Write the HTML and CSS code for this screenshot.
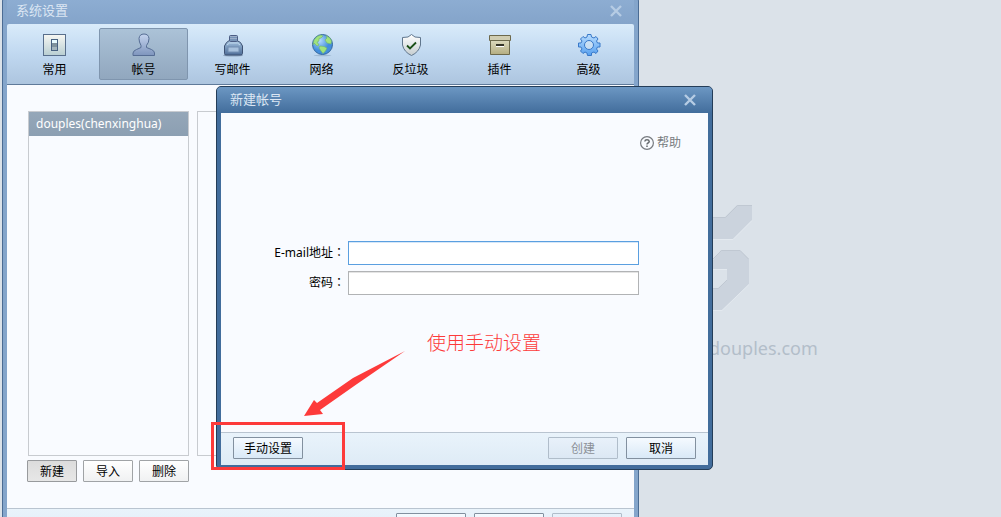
FILE: index.html
```html
<!DOCTYPE html>
<html lang="zh-CN">
<head>
<meta charset="utf-8">
<title>系统设置</title>
<link rel="stylesheet" href="styles.css">
</head>
<body>
<div class="desktop">
  <div class="brand">
    <svg class="brand-mark" width="72" height="108" viewBox="0 0 72 108" aria-hidden="true">
      <g fill="#cbd3dd">
        <path d="M0 13H44L56 1H71V16L52 35H0Z"/>
        <path fill-rule="evenodd" d="M26 64L40 46H59L68 55V80L41 106H0V84H37L46 76V65H26Z"/>
      </g>
      <path d="M0 13.500H44.500L56.500 1.500H71M31 56L40.500 46.500H59L67.500 55M20 84.500H37.500L46 76" fill="none" stroke="#c0c8d2"/>
      <path d="M0 35.500H52L71 16.500M26 65.500H46M20 106.500H41L68 80.500" fill="none" stroke="#e3e9ef"/>
    </svg>
    <span class="brand-name">douples.com</span>
  </div>

  <section class="window settings" aria-label="系统设置">
    <header class="titlebar">
      <h1 class="title">系统设置</h1>
      <button class="close" type="button" aria-label="关闭"><svg width="12" height="12" viewBox="0 0 12 12"><path d="M1 1L11 11M11 1L1 11" stroke="currentColor" stroke-width="2.400"/></svg></button>
    </header>
    <nav class="toolbar">
      <button class="tool" type="button">
        <svg class="icon" viewBox="0 0 24 24"><defs><linearGradient id="g1" x2="0" y2="1"><stop stop-color="#f7f7f3"/><stop offset="1" stop-color="#b8ced2"/></linearGradient></defs><rect x="0.500" y="1.500" width="22" height="21" fill="url(#g1)" stroke="#596f8c"/><rect x="8.500" y="6.500" width="6" height="11" fill="#7f929c" stroke="#476181"/><path d="M9 7h5v3h-5z" fill="#e8fbff"/><path d="M9 14h5v3h-5z" fill="#a3b5bd"/></svg>
        <span>常用</span>
      </button>
      <button class="tool tool-active" type="button">
        <svg class="icon" viewBox="0 0 24 24"><defs><linearGradient id="g2" x2="0" y2="1"><stop stop-color="#c4d3ee"/><stop offset="1" stop-color="#7e95bd"/></linearGradient></defs><path d="M1 22.500V20Q1.500 17.500 4.500 16.500L9 14.500V12.500Q7 9 7 5.500Q7.500 1 12 1T17 5.500Q17 9.500 14.500 12.500V14.500L19.500 16.500Q22.500 18 22.500 20V22.500Z" fill="url(#g2)" stroke="#566d94"/></svg>
        <span>帐号</span>
      </button>
      <button class="tool" type="button">
        <svg class="icon" viewBox="0 0 24 24"><defs><linearGradient id="g3" x2="0" y2="1"><stop stop-color="#a7c6e3"/><stop offset="1" stop-color="#4e6d98"/></linearGradient></defs><ellipse cx="12" cy="22.500" rx="10" ry="1" fill="#8ba3bf"/><path d="M5.500 9.500L9 7H15L19.500 9.500L21.500 13V20.500Q21.500 22 19.500 22H5Q3.500 22 3.500 20.500V13Z" fill="url(#g3)" stroke="#3e5273"/><rect x="8.500" y="2.500" width="8" height="6" rx="1" fill="#7793b7" stroke="#4b5c83"/><path d="M9 3.500h7M9 5.500h7" stroke="#9cafc9"/><path d="M6 12L8.500 10H16.500L19 12" fill="none" stroke="#c1d9ed"/><rect x="7" y="14" width="11" height="5" fill="#a7c1dd" stroke="#728eb2"/></svg>
        <span>写邮件</span>
      </button>
      <button class="tool" type="button">
        <svg class="icon" viewBox="0 0 24 24"><defs><radialGradient id="g4" cx=".35" cy=".3"><stop stop-color="#b5dcff"/><stop offset="1" stop-color="#438edc"/></radialGradient></defs><ellipse cx="12.500" cy="22.500" rx="9" ry=".8" fill="#9fb9d3"/><circle cx="12.500" cy="11.500" r="10" fill="url(#g4)" stroke="#34679d"/><path d="M4 7L7 3.500L11 2L13 3L11 5L9 5.500V8L7 9L9 12L7 13L4 10L3 12ZM16 2.500L20 5L21.500 8L21 11L17 10L15 7L17 5ZM10 13L14 13.500L17 15L15.500 18L13 20.500L11 18L9 15Z" fill="#a1e37c" stroke="#71b36b" stroke-width=".6"/></svg>
        <span>网络</span>
      </button>
      <button class="tool" type="button">
        <svg class="icon" viewBox="0 0 24 24"><defs><linearGradient id="g5" x2="0" y2="1"><stop stop-color="#fff"/><stop offset="1" stop-color="#c5cdd0"/></linearGradient></defs><path d="M12.500 1.500L16 4L21.500 4.500V12Q20 19 12.500 22.500Q5 19 3.500 12V4.500L9 4Z" fill="url(#g5)" stroke="#60768d"/><path d="M8 12.500L11 15.500L17 9.500" fill="none" stroke="#1b5017" stroke-width="1.800"/></svg>
        <span>反垃圾</span>
      </button>
      <button class="tool" type="button">
        <svg class="icon" viewBox="0 0 24 24"><defs><linearGradient id="g6" x2="0" y2="1"><stop stop-color="#dcd9bd"/><stop offset="1" stop-color="#b4ad81"/></linearGradient></defs><path d="M2.500 7.500H21.500V21.500H2.500Z" fill="url(#g6)" stroke="#6d694c"/><path d="M1.500 2.500H22.500V7.500H1.500Z" fill="#d0cdb2" stroke="#6d694c"/><path d="M8 12h8" stroke="#353428" stroke-width="2"/><path d="M8 13.500h8" stroke="#fff"/></svg>
        <span>插件</span>
      </button>
      <button class="tool" type="button">
        <svg class="icon" viewBox="0 0 24 24"><defs><linearGradient id="g7" x2="0" y2="1"><stop stop-color="#b7dcff"/><stop offset="1" stop-color="#57a0ef"/></linearGradient></defs><path fill-rule="evenodd" d="M10.500 1.500H14L14.500 4L17 5L19 3.500L21 6L19.500 8L20.500 10H23V14H20.500L19.500 16L21 18L19 20.500L17 19L14.500 20V22.500H10.500L10 20L8 19L6 20.500L3.500 18L5 16L4 14H1.500V10H4L5 8L3.500 6L6 3.500L8 5L10 4ZM16.500 12A4.500 4.500 0 1 0 7.500 12A4.500 4.500 0 1 0 16.500 12Z" fill="url(#g7)" stroke="#3878c8" stroke-linejoin="round"/></svg>
        <span>高级</span>
      </button>
    </nav>
    <div class="settings-body">
      <div class="panels">
        <div class="accounts"><div class="account">douples(chenxinghua)</div></div>
        <div class="details"></div>
      </div>
      <div class="account-actions">
        <button class="small-btn small-btn-pressed" type="button">新建</button>
        <button class="small-btn" type="button">导入</button>
        <button class="small-btn" type="button">删除</button>
      </div>
    </div>
    <footer class="settings-footer">
      <button class="btn" type="button"></button>
      <button class="btn" type="button"></button>
      <button class="btn" type="button" disabled></button>
    </footer>
  </section>

  <section class="window dialog" role="dialog" aria-label="新建帐号">
    <header class="titlebar">
      <h2 class="title">新建帐号</h2>
      <button class="close" type="button" aria-label="关闭"><svg width="12" height="12" viewBox="0 0 12 12"><path d="M1 1L11 11M11 1L1 11" stroke="currentColor" stroke-width="2.400"/></svg></button>
    </header>
    <form class="dialog-form">
      <div class="dialog-body">
        <a class="help" href="#"><svg width="14" height="14" viewBox="0 0 14 14"><circle cx="7" cy="7" r="6.400" fill="none" stroke="#777b80" stroke-width="1.200"/><path d="M4.800 5.500Q5 3.700 7 3.700T9.200 5.400Q9.200 6.400 8 7Q7 7.500 7 8.500M7 9.500V11" fill="none" stroke="#666a6e" stroke-width="1.500"/></svg>帮助</a>
        <div class="fields">
          <label for="email">E-mail地址<span class="colon" lang="zh-TW">：</span></label><input class="field field-current" id="email" type="text">
          <label for="password">密码<span class="colon" lang="zh-TW">：</span></label><input class="field" id="password" type="password">
        </div>
      </div>
      <footer class="dialog-footer">
        <button class="btn manual" type="button">手动设置</button>
        <button class="btn" type="submit" disabled>创建</button>
        <button class="btn" type="button">取消</button>
      </footer>
    </form>
  </section>

  <div class="note">使用手动设置</div>
  <svg class="arrow" width="103" height="67" viewBox="0 0 103 67" aria-hidden="true"><path d="M102 1L50 28L14 53L11 50L1 66L20 64L17 60L54 34Z" fill="#fd3a3a"/></svg>
  <div class="highlight"></div>
</div>
</body>
</html>
```
FILE: styles.css
```css
* { box-sizing: border-box; }
body {
  margin: 0;
  font: 12px/18px "Noto Sans", "Noto Sans CJK SC", sans-serif;
  color: #000;
}
button, input { font: inherit; color: inherit; }
h1, h2 { margin: 0; }

.desktop {
  position: relative;
  height: 100vh;
  overflow: hidden;
  background: #dbe2e9;
}
.brand {
  position: absolute;
  left: 681px;
  top: 204px;
  width: 140px;
}
.brand-mark { display: block; }
.brand-name {
  display: block;
  margin-top: 24px;
  padding-left: 28px;
  font-size: 18px;
  line-height: 24px;
  color: #b3bec9;
}

.window {
  position: absolute;
  display: flex;
  flex-direction: column;
}
.settings {
  left: 2px;
  top: -4px;
  width: 637px;
  padding: 0 4px 4px;
  border: 1px solid #4b6c94;
  border-radius: 5px;
  background: #84a5cb;
}
.dialog {
  left: 216px;
  top: 86px;
  width: 497px;
  padding: 0 4px 4px;
  border: 1px solid #243d58;
  border-radius: 5px;
  background: #426d9c;
}
.titlebar {
  display: flex;
  align-items: center;
  justify-content: space-between;
  height: 27px;
  padding: 0 12px 0 9px;
}
.settings .titlebar { background: linear-gradient(#8eaed3, #84a4ca); }
.dialog .titlebar {
  height: 26px;
  margin: 0 -4px;
  padding: 0 16px 0 13px;
  border-radius: 4px 4px 0 0;
  background: linear-gradient(#6c97c3, #426d9c);
}
.title {
  padding-bottom: 2px;
  font-size: 13px;
  line-height: 20px;
  font-weight: 400;
  color: #dbe6f3;
}
.close {
  display: flex;
  padding: 0;
  border: 0;
  background: none;
  color: #b6cce4;
}

.toolbar {
  display: flex;
  padding: 4px 0 4px 3px;
  border-bottom: 1px solid #5f7a9a;
  border-radius: 2px 2px 0 0;
  background: linear-gradient(#d9ebfa, #c0d8f0 50%, #adc5df);
}
.tool {
  display: flex;
  flex-direction: column;
  align-items: center;
  gap: 4px;
  width: 89px;
  height: 52px;
  padding: 4px 0 0;
  border: 1px solid transparent;
  border-radius: 2px;
  background: none;
}
.tool-active {
  border-color: #7f95ae;
  background: linear-gradient(#abc2d7, #91a7be);
}
.icon {
  flex: none;
  width: 24px;
  height: 24px;
}

.settings-body {
  padding: 26px 21px;
  background: #f9fbff;
}
.panels {
  display: flex;
  gap: 8px;
  height: 345px;
}
.accounts, .details { border: 1px solid #c8cbd0; }
.accounts { width: 161px; }
.details { flex: 1; }
.account {
  height: 24px;
  padding: 0 7px;
  font-size: 12px;
  line-height: 24px;
  color: #fff;
  background: linear-gradient(#95a7b9, #8c9fb2);
}
.account-actions {
  display: flex;
  gap: 6px;
  margin: 4px 0 0 -1px;
}
.small-btn {
  width: 50px;
  height: 22px;
  padding: 1px 0 0;
  border: 1px solid #a0a3a6;
  border-radius: 1px;
  background: linear-gradient(#fff, #f0f1f2);
}
.small-btn-pressed {
  border-color: #989a9d;
  background: linear-gradient(#dcdcdc, #e7e7e7);
}
.settings-footer, .dialog-footer {
  display: flex;
  gap: 8px;
  padding: 4px 12px 6px;
  border-top: 1px solid #b9c4d0;
  background: linear-gradient(#e9f3fb, #deebf6);
}
.settings-footer { justify-content: flex-end; }
.btn {
  width: 70px;
  height: 22px;
  padding: 1px 0 0;
  border: 1px solid #82909f;
  border-radius: 1px;
  background: linear-gradient(#f5faff, #d9e9f7);
}
.btn:disabled {
  border-color: #b0bdca;
  color: #8b9097;
  background: linear-gradient(#e8f1fa, #dce8f4);
}
.manual { margin-right: auto; }

.dialog-form { margin: 0; }
.dialog-body {
  display: flex;
  flex-direction: column;
  gap: 89px;
  min-height: 319px;
  padding: 21px 28px 20px;
  background: #f9fbff;
}
.help {
  display: flex;
  align-items: center;
  align-self: flex-end;
  gap: 3px;
  margin-right: -1px;
  color: #777b80;
  text-decoration: none;
}
.fields {
  display: grid;
  grid-template-columns: 99px 1fr;
  gap: 6px 0;
  align-items: center;
  padding-right: 41px;
}
.fields label {
  padding-right: 3px;
  text-align: right;
  white-space: nowrap;
}
.colon { font-family: "Noto Sans CJK TC", sans-serif; line-height: 1; }
.field {
  width: 100%;
  height: 24px;
  border: 1px solid #b1b3b5;
  background: #fff;
  box-shadow: inset 0 1px #e4e4e4;
}
.field-current {
  border-color: #5a9fe0;
  box-shadow: inset 0 1px #d6e7f8;
}

.note {
  position: absolute;
  left: 427px;
  top: 331px;
  font-size: 19px;
  line-height: 24px;
  font-weight: 300;
  color: #fd3a3a;
}
.arrow {
  position: absolute;
  left: 303px;
  top: 350px;
}
.highlight {
  position: absolute;
  left: 211px;
  top: 422px;
  width: 134px;
  height: 48px;
  border: 3px solid #fd3a3a;
}
```
